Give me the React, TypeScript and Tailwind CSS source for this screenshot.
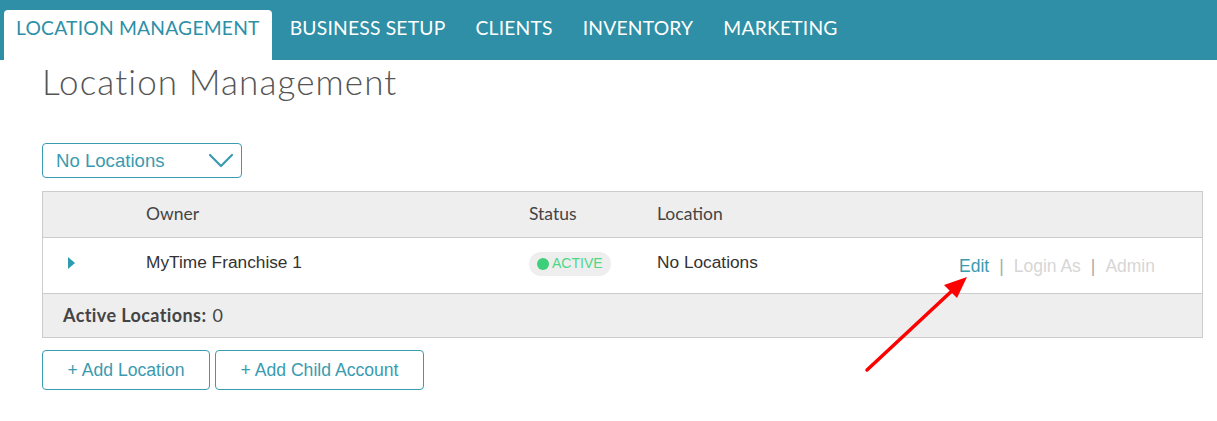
const navItems = ["LOCATION MANAGEMENT", "BUSINESS SETUP", "CLIENTS", "INVENTORY", "MARKETING"];

export default function App() {
  return (
    <div className="relative w-[1217px] h-[421px] bg-white overflow-hidden font-['Liberation_Sans',sans-serif]">
      {/* Top nav */}
      <nav className="h-[60px] bg-[#2e8fa6] flex items-end pl-1">
        {navItems.map((item, i) => (
          <div
            key={item}
            className={`h-[50px] flex items-start pt-[4px] font-['Lato',sans-serif] text-[19.3px] tracking-[0.2px] ${
              i === 0 ? "bg-white text-[#2e8fa6] rounded-t px-3 mr-[6px]" : "text-white px-3 mr-[6px]"
            }`}
          >
            {item}
          </div>
        ))}
      </nav>

      <main className="px-[42px]">
        <h1 className="mt-[-3px] font-['Lato',sans-serif] font-light text-[35px] leading-[48px] text-[#555] tracking-[1.1px]">
          Location Management
        </h1>

        {/* Select */}
        <div className="mt-[38px] w-[200px] h-[35px] border border-[#3a9bb0] rounded flex items-center justify-between pl-[13px] pr-[6px] text-[18.6px] text-[#3a9bb0]">
          <span>No Locations</span>
          <svg width="28" height="16" viewBox="0 0 28 16" fill="none" stroke="#3a9bb0" strokeWidth="2.2" strokeLinecap="round" strokeLinejoin="round">
            <polyline points="3,2 14,13 25,2" />
          </svg>
        </div>

        {/* Table */}
        <div className="mt-[13px] w-[1161px] border border-[#ccc]">
          <div className="h-[46px] bg-[#eee] flex items-center font-['Lato',sans-serif] text-[17.5px] text-[#444] border-b border-[#ccc]">
            <div className="w-[103px]" />
            <div className="w-[383px]">Owner</div>
            <div className="w-[128px]">Status</div>
            <div>Location</div>
          </div>
          <div className="h-[56px] flex items-center text-[17.3px] text-[#333] border-b border-[#ccc]">
            <div className="w-[103px] pl-[25px] pb-[5px]">
              <div className="w-0 h-0 border-y-[6px] border-y-transparent border-l-[7px] border-l-[#2e9bb0]" />
            </div>
            <div className="w-[383px] pb-[5px]">MyTime Franchise 1</div>
            <div className="w-[128px] pb-[2px]">
              <span className="inline-flex items-center gap-[3px] h-[24px] px-[8px] rounded-full bg-[#eee] text-[14px] text-[#4cd884]">
                <span className="w-[12px] h-[12px] rounded-full bg-[#3ecf7a]" />
                ACTIVE
              </span>
            </div>
            <div className="w-[302px] pb-[5px]">No Locations</div>
            <div className="flex items-center pt-[1px] text-[17.5px]">
              <span className="text-[#3a9bb0]">Edit</span>
              <span className="text-[#aaa] mx-[10px]">|</span>
              <span className="text-[#d6d6d6]">Login As</span>
              <span className="text-[#aaa] mx-[10px]">|</span>
              <span className="text-[#d6d6d6]">Admin</span>
            </div>
          </div>
          <div className="h-[43px] bg-[#eee] flex items-center pl-[20px] font-['Lato',sans-serif] text-[18px] tracking-[0.4px] text-[#444]">
            <span className="font-bold">Active Locations:</span>
            <span className="ml-[6px]">0</span>
          </div>
        </div>

        {/* Buttons */}
        <div className="mt-[12px] flex gap-[5px]">
          <button className="w-[168px] h-[40px] border border-[#3a9bb0] rounded text-[17.6px] text-[#3a9bb0]">
            + Add Location
          </button>
          <button className="w-[209px] h-[40px] border border-[#3a9bb0] rounded text-[17.6px] text-[#3a9bb0]">
            + Add Child Account
          </button>
        </div>
      </main>

      {/* Annotation arrow */}
      <svg className="absolute left-0 top-0 pointer-events-none" width="1217" height="421">
        <line x1="867" y1="370" x2="955" y2="288" stroke="#ff0000" strokeWidth="3.5" strokeLinecap="round" />
        <polygon points="967,277 944,285 957,298" fill="#ff0000" />
      </svg>
    </div>
  );
}
